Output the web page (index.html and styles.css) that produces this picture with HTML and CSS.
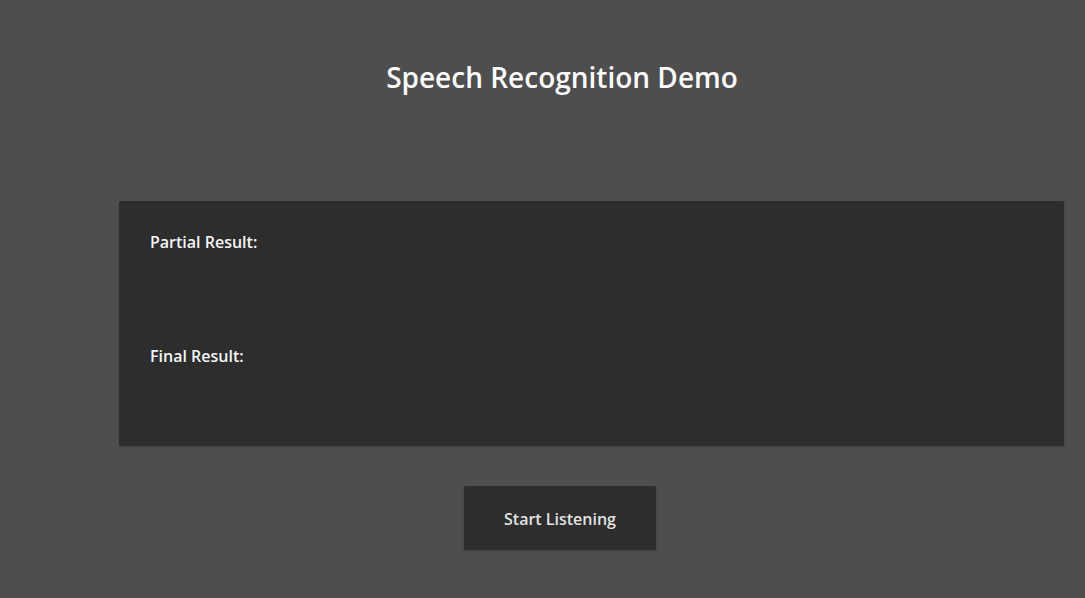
FILE: index.html
```html
<!DOCTYPE html>
<html>
<head>
<meta charset="utf-8">
<link rel="stylesheet" href="styles.css">
</head>
<body>
<div class="page">
  <h1 class="title">Speech Recognition Demo</h1>
  <div class="panel">
    <div class="result">
      <div class="label">Partial Result:</div>
      <div class="value"></div>
    </div>
    <div class="result">
      <div class="label">Final Result:</div>
      <div class="value"></div>
    </div>
  </div>
  <div class="actions">
    <button class="btn">Start Listening</button>
  </div>
</div>
</body>
</html>
```
FILE: styles.css
```css
html, body {
  margin: 0;
  padding: 0;
  background: #4e4e4e;
  overflow: hidden;
}
body {
  font-family: "Open Sans", "Noto Sans", sans-serif;
  color: #fff;
  width: 1085px;
  height: 598px;
}
.page {
  width: 1120px;
  display: flex;
  flex-direction: column;
}
.title {
  margin: 57px 0 0 0;
  padding-left: 4px;
  font-size: 28px;
  font-weight: 600;
  line-height: 40px;
  text-align: center;
  color: #fafafa;
}
.panel {
  margin: 104px 0 0 119px;
  width: 945px;
  height: 245px;
  box-sizing: border-box;
  background: #2d2d2d;
  border-radius: 2px;
  box-shadow: 0 1px 2px rgba(0,0,0,0.25);
  padding: 30px 31px;
  display: flex;
  flex-direction: column;
}
.result {
  flex-shrink: 0;
}
.result:first-child {
  height: 114px;
}
.label {
  font-size: 16px;
  font-weight: 600;
  line-height: 22px;
  color: #f5f5f5;
}
.actions {
  display: flex;
  justify-content: center;
  margin-top: 40px;
}
.btn {
  width: 192px;
  height: 64px;
  padding: 2px 0 0 0;
  background: #2d2d2d;
  color: #e2e2e2;
  border: none;
  border-radius: 2px;
  font-family: "Open Sans", "Noto Sans", sans-serif;
  font-size: 16px;
  font-weight: 600;
  box-shadow: 0 1px 2px rgba(0,0,0,0.25);
}
```
